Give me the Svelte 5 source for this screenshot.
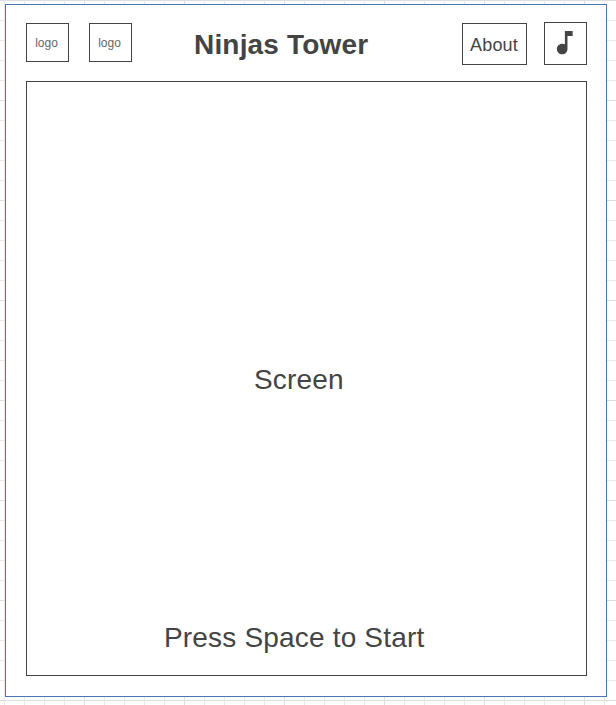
<script>
  const logos = ['logo', 'logo'];
</script>

<div class="canvas">
  <main class="frame">
    <header>
      {#each logos as label}
        <div class="logo">{label}</div>
      {/each}
      <h1>Ninjas Tower</h1>
      <button class="about">About</button>
      <button class="music" aria-label="Music">
        <svg viewBox="0 0 24 24" width="31" height="31">
          <path d="M12.3 3v10.4c-.6-.34-1.4-.5-2.1-.5-2.3 0-4.1 1.85-4.1 4.1s1.8 4.1 4.1 4.1 4.1-1.85 4.1-4.1V7h4V3h-6z" />
        </svg>
      </button>
    </header>
    <section class="screen">
      <p class="title">Screen</p>
      <p class="start">Press Space to Start</p>
    </section>
  </main>
</div>

<style>
  :global(body) {
    margin: 0;
  }
  * {
    box-sizing: border-box;
  }
  .canvas {
    width: 616px;
    height: 705px;
    overflow: hidden;
    padding: 4px 0 0 5px;
    background-color: #fff;
    background-image:
      linear-gradient(#dedede 1px, transparent 1px),
      linear-gradient(90deg, #dedee4 1px, transparent 1px),
      linear-gradient(#e9e9ec 1px, transparent 1px),
      linear-gradient(90deg, #e9e9f0 1px, transparent 1px);
    background-size: 100px 100px, 100px 100px, 20px 20px, 20px 20px;
    background-position: 0 0, 84px 0, 0 0, 4px 0;
    font-family: 'Liberation Sans', Arial, sans-serif;
    color: #444;
  }
  .frame {
    width: 602px;
    height: 693px;
    padding: 17px 19px 20px 20px;
    border: 1px solid #4a76b8;
    background: #fff;
    display: flex;
    flex-direction: column;
    gap: 16px;
  }
  header {
    height: 43px;
    display: flex;
    align-items: flex-start;
  }
  .logo,
  button {
    border: 1px solid #444;
    background: #fff;
    color: inherit;
    font-family: inherit;
    display: flex;
    align-items: center;
    justify-content: center;
    padding: 0;
  }
  .logo {
    width: 43px;
    height: 39px;
    margin: 1px 20px 0 0;
    padding-right: 2px;
    font-size: 12px;
    color: #666;
  }
  h1 {
    flex: 1;
    margin: 0 0 0 42px;
    font-size: 28px;
    letter-spacing: 0.18px;
    line-height: 45px;
    white-space: nowrap;
  }
  .about {
    width: 65px;
    height: 42px;
    margin: 1px 17px 0 0;
    padding: 2px 1px 0 0;
    font-size: 18px;
    letter-spacing: 0.2px;
  }
  .music {
    width: 43px;
    height: 43px;
    padding: 0 2px 2px 0;
  }
  svg {
    display: block;
    fill: #444;
  }
  .screen {
    flex: 1;
    border: 1px solid #444;
    display: flex;
    flex-direction: column;
    justify-content: space-between;
    padding: 282px 0 21px;
  }
  p {
    margin: 0;
    font-size: 28px;
    letter-spacing: 0.18px;
    line-height: 32px;
  }
  .title {
    padding-left: 227px;
  }
  .start {
    padding-left: 137px;
  }
</style>
